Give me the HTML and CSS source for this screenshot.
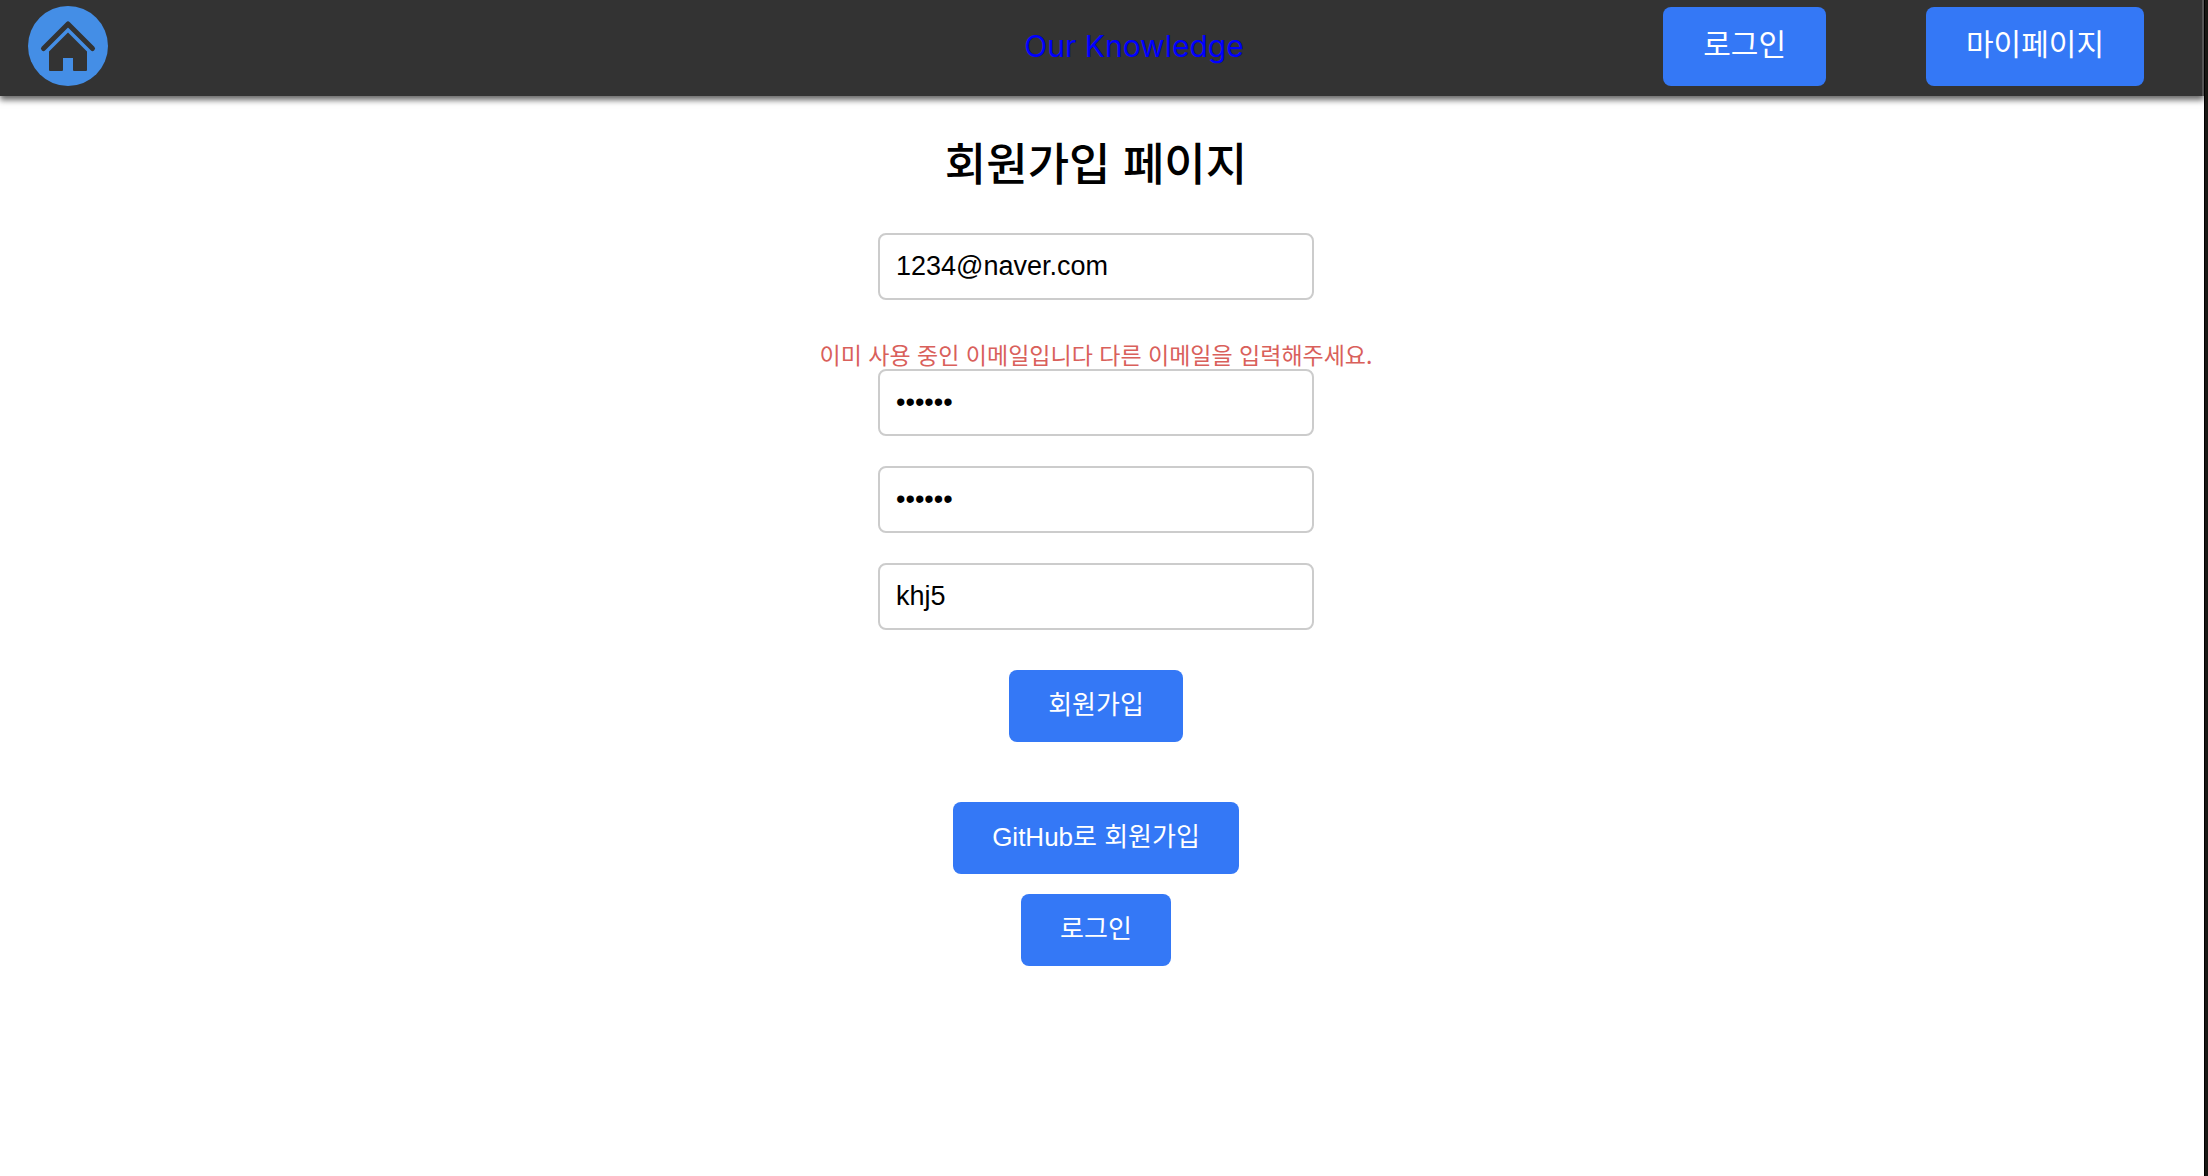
FILE: index.html
```html
<!DOCTYPE html>
<html lang="ko">
<head>
  <meta charset="UTF-8">
  <title>회원가입 페이지</title>
  <link rel="stylesheet" href="styles.css">
</head>
<body>
<header class="header">
  <a class="home" href="#" aria-label="Home">
    <svg width="80" height="80" viewBox="0 0 80 80">
      <circle cx="40" cy="40" r="40" fill="#448ee6"/>
      <path d="M15.5 42.5 L40 18 L64.5 42.5" fill="none" stroke="#333" stroke-width="5" stroke-linecap="round" stroke-linejoin="round"/>
      <path d="M40 26.5 L59 45.5 V64 Q59 65 58 65 H46 Q45 65 45 64 V52 H35 V64 Q35 65 34 65 H22 Q21 65 21 64 V45.5 Z" fill="#333"/>
    </svg>
  </a>
  <a class="title" href="#">Our Knowledge</a>
  <div class="menu">
    <button type="button" class="btn btn-menu">로그인</button>
    <button type="button" class="btn btn-menu">마이페이지</button>
  </div>
</header>
<main class="container">
  <h1>회원가입 페이지</h1>
  <form class="form">
    <input type="email" class="email" aria-label="이메일" value="1234@naver.com">
    <p class="error">이미 사용 중인 이메일입니다 다른 이메일을 입력해주세요.</p>
    <input type="password" aria-label="비밀번호" value="123456">
    <input type="password" aria-label="비밀번호 확인" value="123456">
    <input type="text" aria-label="닉네임" value="khj5">
    <button type="button" class="btn btn-join">회원가입</button>
  </form>
  <div class="links">
    <button type="button" class="btn">GitHub로 회원가입</button>
    <button type="button" class="btn">로그인</button>
  </div>
</main>
</body>
</html>
```
FILE: styles.css
```css
* {
  box-sizing: border-box;
}

html {
  background-color: #181713;
}

body {
  margin: 0 3px 0 0;
  min-height: 100vh;
  border-right: 1px solid #000;
  background-color: #fff;
  font-family: "Liberation Sans", "Noto Sans CJK KR", sans-serif;
}

.header {
  display: flex;
  align-items: center;
  height: 96px;
  padding: 0 58px 4px 28px;
  border-right: 2px solid #555;
  background-color: #333;
  box-shadow: 0 4px 6px rgba(0, 0, 0, 0.6);
}

.home svg {
  display: block;
}

.title {
  margin-left: auto;
  color: #0000ff;
  font-family: Inter, sans-serif;
  font-size: 30px;
  text-decoration: none;
}

.menu {
  display: flex;
  gap: 100px;
  margin-left: 19vw;
}

.btn {
  height: 72px;
  padding: 0 39px 8px;
  border: none;
  border-radius: 8px;
  background-color: #3478f6;
  color: #fff;
  font-family: inherit;
  font-size: 26px;
  cursor: pointer;
}

.btn-menu {
  height: 79px;
  padding: 0 40px 8px;
  font-size: 30px;
}

.container {
  display: flex;
  flex-direction: column;
  align-items: center;
  padding: 36px 12px 0 0;
}

h1 {
  margin: 0 0 33px;
  font-size: 45px;
  font-weight: 500;
  line-height: 68px;
}

.form {
  display: flex;
  flex-direction: column;
  align-items: center;
}

input {
  width: 436px;
  height: 67px;
  margin-bottom: 30px;
  padding: 0 16px;
  border: 2px solid #ccc;
  border-radius: 8px;
  background-color: #fff;
  color: #000;
  font-family: inherit;
  font-size: 27px;
}

.email {
  margin-bottom: 40px;
}

.error {
  margin: 0;
  color: #d9605b;
  font-family: "Noto Sans CJK KR", sans-serif;
  font-size: 23px;
  line-height: 29px;
}

.btn-join {
  margin-top: 10px;
}

.links {
  display: flex;
  flex-direction: column;
  align-items: center;
  gap: 20px;
  margin-top: 60px;
}
```
